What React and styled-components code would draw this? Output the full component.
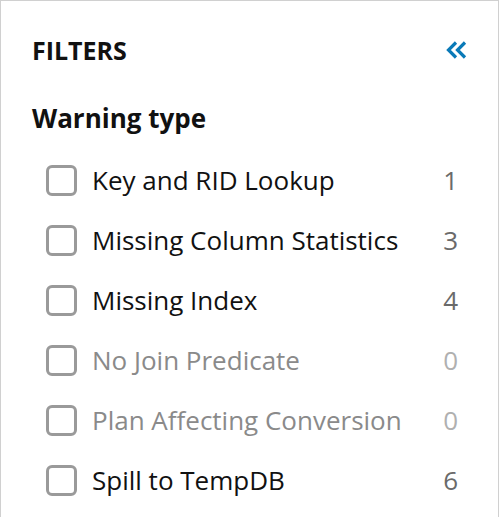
import { createGlobalStyle, styled } from 'styled-components';

const warnings = [
  { label: 'Key and RID Lookup', count: 1 },
  { label: 'Missing Column Statistics', count: 3 },
  { label: 'Missing Index', count: 4 },
  { label: 'No Join Predicate', count: 0 },
  { label: 'Plan Affecting Conversion', count: 0 },
  { label: 'Spill to TempDB', count: 6 },
];

const App = () => {
  return (
    <>
      <GlobalStyle />
      <StyledPanel>
        <StyledHeader>
          <StyledTitle>FILTERS</StyledTitle>
          <StyledCollapse aria-label='Collapse filters'>
            <svg width='22' height='18' viewBox='0 0 22 18' fill='none'>
              <path
                d='M10 1.5 L2.5 9 L10 16.5 M19 1.5 L11.5 9 L19 16.5'
                stroke='#0a7ab8'
                strokeWidth='3.2'
              />
            </svg>
          </StyledCollapse>
        </StyledHeader>
        <StyledGroupTitle>Warning type</StyledGroupTitle>
        <StyledList>
          {warnings.map((w) => (
            <StyledItem key={w.label} $disabled={w.count === 0}>
              <StyledCheck type='checkbox' disabled={w.count === 0} />
              <StyledLabel>{w.label}</StyledLabel>
              <StyledCount $disabled={w.count === 0}>{w.count}</StyledCount>
            </StyledItem>
          ))}
        </StyledList>
      </StyledPanel>
    </>
  );
};

export default App;

const GlobalStyle = createGlobalStyle`
  body {
    margin: 0;
    background: #fff;
    font-family: 'Open Sans', 'Liberation Sans', sans-serif;
  }
`;

const StyledPanel = styled.aside`
  width: 499px;
  height: 517px;
  box-sizing: border-box;
  border: 1px solid #d0d0d0;
  border-bottom: none;
  padding: 30px 40px 0 31px;
  overflow: hidden;
`;

const StyledHeader = styled.div`
  display: flex;
  justify-content: space-between;
  align-items: center;
  height: 38px;
`;

const StyledTitle = styled.h2`
  margin: 0;
  font-size: 25px;
  font-weight: 700;
  color: #111;
`;

const StyledCollapse = styled.button`
  display: flex;
  border: none;
  background: none;
  padding: 0;
  margin-right: -10px;
  cursor: pointer;
`;

const StyledGroupTitle = styled.h3`
  margin: 32px 0 0;
  font-size: 26px;
  font-weight: 700;
  line-height: 34px;
  color: #111;
`;

const StyledList = styled.ul`
  list-style: none;
  margin: 15px 0 0;
  padding: 0 0 0 14px;
`;

const StyledItem = styled.li`
  display: flex;
  align-items: center;
  height: 60px;
  gap: 15px;
  color: ${(p) => (p.$disabled ? '#8a8a8a' : '#111')};
`;

const StyledCheck = styled.input`
  appearance: none;
  margin: 0;
  width: 31px;
  height: 31px;
  box-sizing: border-box;
  border: 3px solid #9a9a9a;
  border-radius: 6px;
  background: #fff;
  flex-shrink: 0;
`;

const StyledLabel = styled.span`
  flex: 1;
  font-size: 26px;
`;

const StyledCount = styled.span`
  font-size: 26px;
  color: ${(p) => (p.$disabled ? '#b0b0b0' : '#6a6a6a')};
`;
